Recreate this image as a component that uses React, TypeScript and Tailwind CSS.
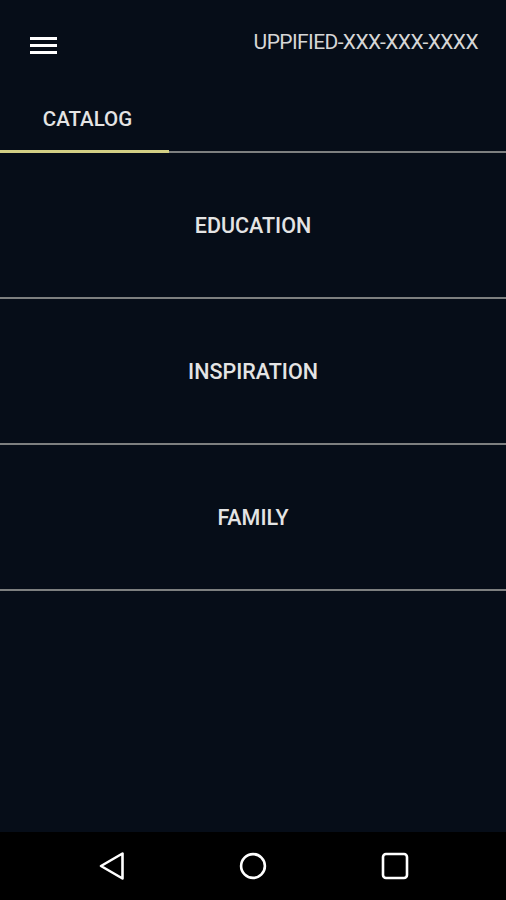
import React from "react";

const rows = ["EDUCATION", "INSPIRATION", "FAMILY"];

export default function App() {
  return (
    <div
      className="flex h-[900px] w-[506px] flex-col bg-[#060d18] text-[#e2e2e2]"
      style={{ fontFamily: "Roboto, 'Liberation Sans', sans-serif" }}
    >
      <header className="flex h-[86px] items-center justify-between pl-[30px] pr-[28px]">
        <div className="mt-[4px] flex w-[27px] flex-col gap-[4px]">
          <div className="h-[3px] w-full bg-white" />
          <div className="h-[3px] w-full bg-white" />
          <div className="h-[3px] w-full bg-white" />
        </div>
        <div className="text-[21px] tracking-[-0.6px] text-[#d6d6d6]">UPPIFIED-XXX-XXX-XXXX</div>
      </header>

      <nav className="flex border-b-2 border-[#7d7f7f]">
        <div className="-mb-[2px] flex h-[67px] w-[169px] items-center justify-center border-b-[3px] border-[#d2cf85] pl-[6px] pt-[3px] text-[20.5px] font-medium text-[#e4e4e4]">
          CATALOG
        </div>
      </nav>

      {rows.map((r) => (
        <div
          key={r}
          className="flex h-[146px] items-center justify-center border-b-2 border-[#7d7f7f] pt-[3px] text-[21.5px] font-medium text-[#e4e4e4]"
        >
          {r}
        </div>
      ))}

      <div className="flex-1" />

      <div className="flex h-[68px] items-center bg-black">
        <div className="flex w-full items-center gap-[112px] pl-[98px] pb-[1px]">
          <svg width="28" height="30" viewBox="0 0 28 30" fill="none">
            <path
              d="M3 15 L24.5 2.5 L24.5 27.5 Z"
              stroke="white"
              strokeWidth="2.6"
              strokeLinejoin="round"
            />
          </svg>
          <svg width="30" height="30" viewBox="0 0 30 30" fill="none">
            <circle cx="15" cy="15" r="11.9" stroke="white" strokeWidth="2.6" />
          </svg>
          <svg width="30" height="30" viewBox="0 0 30 30" fill="none">
            <rect x="3" y="3" width="24" height="24" rx="3" stroke="white" strokeWidth="2.6" />
          </svg>
        </div>
      </div>
    </div>
  );
}
